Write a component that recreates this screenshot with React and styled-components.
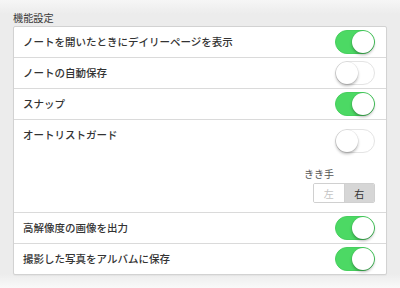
import React from "react";
import styled, { createGlobalStyle } from "styled-components";

const Global = createGlobalStyle`
  html, body { margin: 0; padding: 0; }
  body {
    width: 400px;
    height: 288px;
    overflow: hidden;
    background: linear-gradient(to bottom, #f6f6f6 0px, #ececec 14px, #ececec 274px, #f9f9f9 288px);
    font-family: "Noto Sans CJK JP", "Noto Sans", sans-serif;
    color: #333;
  }
`;

const Page = styled.div`
  padding: 9px 13px 0 13px;
  display: flex;
  flex-direction: column;
`;

const SectionTitle = styled.div`
  font-size: 10.2px;
  line-height: 17px;
  color: #3a3a3a;
  padding-left: 0;
`;

const Card = styled.div`
  background: #fff;
  border: 1px solid #d2d2d2;
  border-radius: 2px;
  box-shadow: 0 1px 1px rgba(0, 0, 0, 0.04);
  display: flex;
  flex-direction: column;
`;

const Row = styled.div`
  display: flex;
  align-items: ${(p) => (p.$tall ? "flex-start" : "center")};
  justify-content: space-between;
  min-height: 30px;
  padding: ${(p) => (p.$tall ? "0 11px 9px 9px" : "0 11px 0 9px")};
  border-top: ${(p) => (p.$first ? "none" : "1px solid #dadada")};
`;

const Label = styled.div`
  font-size: 10.5px;
  line-height: 30px;
  color: #333;
  font-weight: 500;
`;

const SwitchTrack = styled.div`
  position: relative;
  box-sizing: border-box;
  width: 40px;
  height: 24px;
  border-radius: 12px;
  background: ${(p) => (p.$on ? "#4cd964" : "#fff")};
  border: 1px solid ${(p) => (p.$on ? "#47cf5e" : "#e4e4e4")};
  flex: none;
`;

const Knob = styled.div`
  position: absolute;
  top: 0px;
  left: ${(p) => (p.$on ? "16px" : "0px")};
  width: 22px;
  height: 22px;
  border-radius: 50%;
  background: #fff;
  box-shadow: 0 2px 3px rgba(0, 0, 0, 0.28), 0 0 0 0.5px rgba(0, 0, 0, 0.08);
`;

const Switch = ({ on }) => (
  <SwitchTrack $on={on}>
    <Knob $on={on} />
  </SwitchTrack>
);

const SideColumn = styled.div`
  display: flex;
  flex-direction: column;
  align-items: flex-end;
  padding-top: 9px;
`;

const HandLabel = styled.div`
  font-size: 10px;
  line-height: 14px;
  color: #555;
  margin-top: 14px;
  margin-right: 41px;
`;

const Segmented = styled.div`
  display: flex;
  margin-top: 2px;
  border: 1px solid #d0d0d0;
  border-radius: 2px;
  overflow: hidden;
  width: 62px;
  height: 20px;
  box-sizing: border-box;
`;

const Segment = styled.div`
  flex: 1;
  display: flex;
  align-items: center;
  justify-content: center;
  font-size: 10px;
  background: ${(p) => (p.$active ? "#d6d6d6" : "#fff")};
  color: ${(p) => (p.$active ? "#333" : "#c4c4c4")};
  & + & {
    border-left: 1px solid #d0d0d0;
  }
`;

export default function App() {
  return (
    <>
      <Global />
      <Page>
        <SectionTitle>機能設定</SectionTitle>
        <Card>
          <Row $first>
            <Label>ノートを開いたときにデイリーページを表示</Label>
            <Switch on />
          </Row>
          <Row>
            <Label>ノートの自動保存</Label>
            <Switch on={false} />
          </Row>
          <Row>
            <Label>スナップ</Label>
            <Switch on />
          </Row>
          <Row $tall>
            <Label>オートリストガード</Label>
            <SideColumn>
              <Switch on={false} />
              <HandLabel>きき手</HandLabel>
              <Segmented>
                <Segment>左</Segment>
                <Segment $active>右</Segment>
              </Segmented>
            </SideColumn>
          </Row>
          <Row>
            <Label>高解像度の画像を出力</Label>
            <Switch on />
          </Row>
          <Row>
            <Label>撮影した写真をアルバムに保存</Label>
            <Switch on />
          </Row>
        </Card>
      </Page>
    </>
  );
}
